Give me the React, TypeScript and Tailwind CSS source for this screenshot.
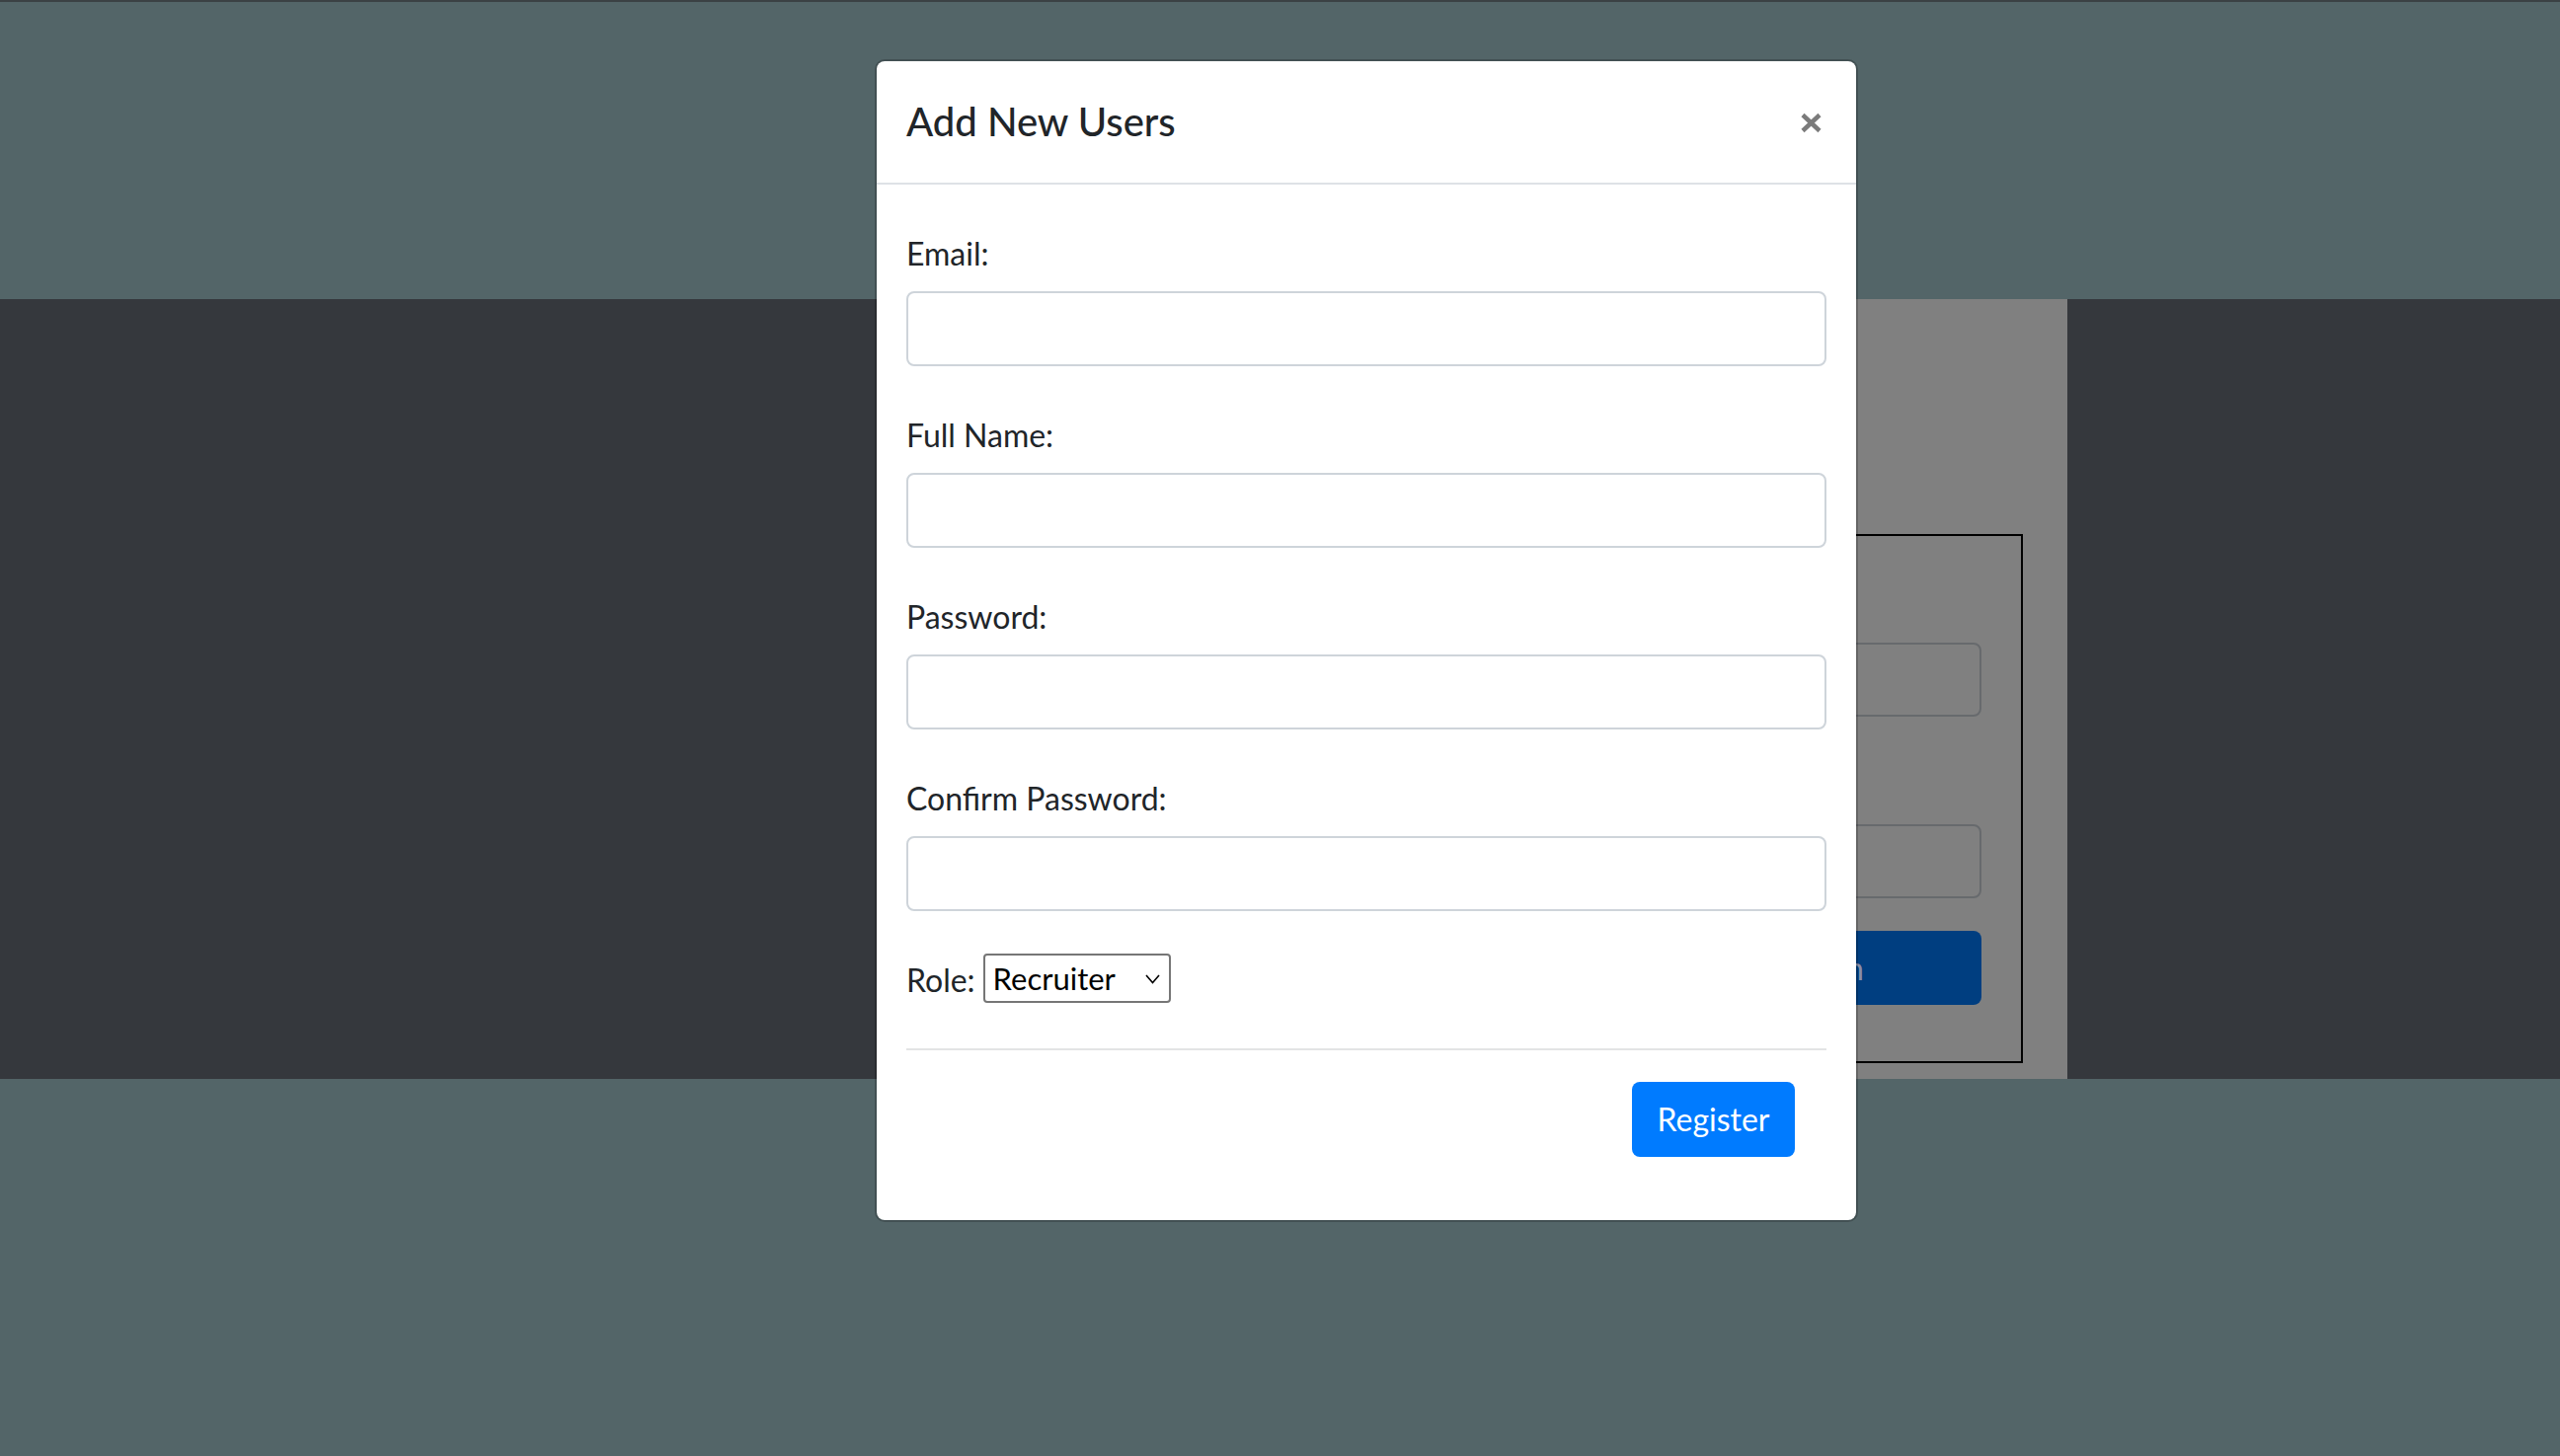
import { useState } from 'react';

const font = { fontFamily: 'Lato, "Noto Sans", sans-serif' };

function Field({ label, type = 'text' }: { label: string; type?: string }) {
  return (
    <div className="flex flex-col">
      <label className="text-[32px] leading-[48px] text-[#212529] mb-[14px]">{label}</label>
      <input
        type={type}
        className="h-[76px] w-full rounded-[8px] border-2 border-[#ced4da] bg-white px-[24px] text-[32px] text-[#495057] outline-none"
      />
    </div>
  );
}

export default function App() {
  const [role, setRole] = useState('Recruiter');

  return (
    <div className="relative flex min-h-screen flex-col overflow-hidden" style={font}>
      {/* page behind the backdrop */}
      <div className="h-[2px] bg-[#3b4144]" />
      <div className="h-[301px] bg-[#536568]" />
      <div className="flex h-[790px] bg-[#35383d]">
        <div className="ml-auto mr-[499px] flex w-[488px] flex-col bg-[#808080] px-[45px] pt-[238px] pb-[16px]">
          <div className="flex flex-1 flex-col border-2 border-black px-[40px] pt-[108px]">
            <div className="h-[75px] rounded-[8px] border-2 border-[#676a6d]" />
            <div className="mt-[109px] h-[75px] rounded-[8px] border-2 border-[#676a6d]" />
            <div className="mt-[33px] flex h-[75px] items-center justify-center rounded-[8px] bg-[#003e80] text-[32px] text-[#8a8fa8]">
              Login
            </div>
          </div>
        </div>
      </div>
      <div className="flex-1 bg-[#536568]" />

      {/* modal */}
      <div className="absolute left-[886px] top-[60px] flex w-[996px] flex-col rounded-[10px] border-2 border-black/20 bg-white bg-clip-padding">
        <div className="flex items-center justify-between border-b-2 border-[#dee2e6] pl-[30px] pr-[34px] pt-[31px] pb-[32px]">
          <h5 className="text-[40px] font-medium leading-[60px] text-[#212529]">Add New Users</h5>
          <button className="mt-[2px] text-[#7b7b7b]">
            <svg width="23" height="21" viewBox="0 0 23 21">
              <path d="M3 2.5 L20 18.5 M20 2.5 L3 18.5" stroke="currentColor" strokeWidth="4.5" strokeLinecap="butt" />
            </svg>
          </button>
        </div>

        <div className="flex flex-col px-[30px] pt-[46px]">
          <div className="flex flex-col gap-[46px]">
            <Field label="Email:" type="email" />
            <Field label="Full Name:" />
            <Field label="Password:" type="password" />
            <Field label="Confirm Password:" type="password" />
          </div>

          <div className="mt-[43px] flex h-[50px] items-center gap-[8px] text-[32px] text-[#212529]">
            <span className="mt-[4px] leading-[48px]">Role:</span>
            <div className="relative h-[50px] w-[190px] rounded-[4px] border-2 border-[#767676]">
              <select
                value={role}
                onChange={(e) => setRole(e.target.value)}
                className="absolute inset-0 appearance-none bg-transparent pl-[8px] text-[31px] leading-[46px] text-black outline-none"
              >
                <option>Recruiter</option>
                <option>Admin</option>
              </select>
              <svg className="pointer-events-none absolute right-[9px] top-[19px]" width="15" height="10" viewBox="0 0 15 10">
                <path d="M1 1 L7.5 8.5 L14 1" fill="none" stroke="black" strokeWidth="1.6" />
              </svg>
            </div>
          </div>

          <hr className="mt-[46px] border-t-2 border-[#e3e4e5]" />

          <div className="flex justify-end pr-[32px] pt-[32px] pb-[64px]">
            <button className="flex h-[76px] w-[165px] items-center justify-center rounded-[8px] bg-[#007bff] text-[32px] text-white">
              Register
            </button>
          </div>
        </div>
      </div>
    </div>
  );
}
